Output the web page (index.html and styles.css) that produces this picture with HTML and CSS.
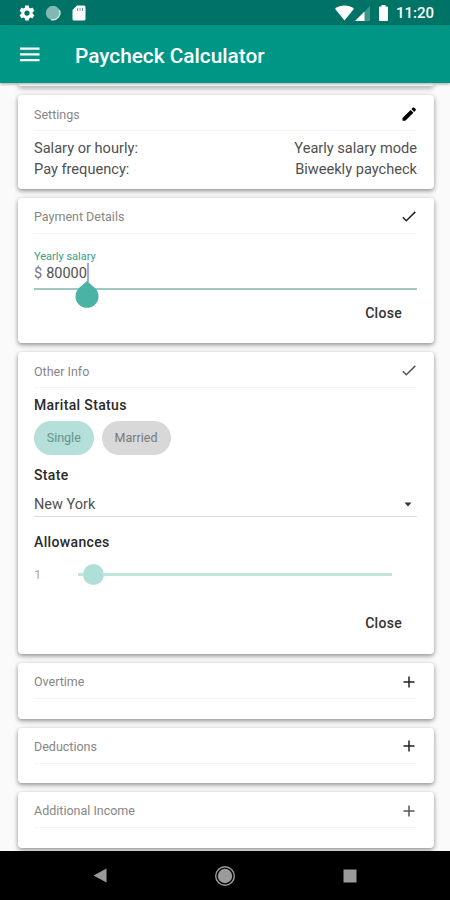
FILE: index.html
```html
<!DOCTYPE html>
<html lang="en">
<head>
<meta charset="utf-8">
<title>Paycheck Calculator</title>
<link rel="stylesheet" href="styles.css">
</head>
<body>
<div class="statusbar">
  <svg class="gear" width="18" height="18" viewBox="0 0 24 24"><path fill="#fff" d="M19.43 12.98c.04-.32.07-.64.07-.98s-.03-.66-.07-.98l2.11-1.65c.19-.15.24-.42.12-.64l-2-3.46c-.12-.22-.39-.3-.61-.22l-2.49 1c-.52-.4-1.08-.73-1.69-.98l-.38-2.65C14.46 2.18 14.25 2 14 2h-4c-.25 0-.46.18-.49.42l-.38 2.65c-.61.25-1.17.59-1.69.98l-2.49-1c-.23-.09-.49 0-.61.22l-2 3.46c-.13.22-.07.49.12.64l2.11 1.65c-.04.32-.07.65-.07.98s.03.66.07.98l-2.11 1.65c-.19.15-.24.42-.12.64l2 3.46c.12.22.39.3.61.22l2.49-1c.52.4 1.08.73 1.69.98l.38 2.65c.03.24.24.42.49.42h4c.25 0 .46-.18.49-.42l.38-2.65c.61-.25 1.17-.59 1.69-.98l2.49 1c.23.09.49 0 .61-.22l2-3.46c.12-.22.07-.49-.12-.64l-2.11-1.65zM12 15.500a3.500 3.500 0 1 1 0-7 3.500 3.500 0 0 1 0 7z"/></svg>
  <svg class="sync" width="16" height="16" viewBox="0 0 16 16"><circle cx="8" cy="8" r="7.200" fill="#7fb9b1"/><path d="M14.300 5A7 7 0 0 1 6 14.600" fill="none" stroke="#d5e9e6" stroke-width="1.300"/></svg>
  <svg class="sd" width="14" height="16" viewBox="0 0 14 16"><path fill="#fff" d="M5 .5h7a1.500 1.500 0 0 1 1.500 1.500v12a1.500 1.500 0 0 1-1.500 1.500H2A1.500 1.500 0 0 1 .5 14V5z"/><path stroke="#00796b" stroke-width="1" opacity=".65" d="M5.500 3v3M8 3v3M10.500 3v3"/></svg>
  <span class="space"></span>
  <svg width="19" height="16" viewBox="0 0 19 16"><path fill="#fff" d="M9.500 15.500 0 3.800C5.500-.6 13.500-.6 19 3.800z"/></svg>
  <svg class="signal" width="15" height="15" viewBox="0 0 15 15"><path fill="#3f958a" d="M0 15 15 0v15z"/><path fill="#fff" d="M0 15 9.500 5.500V15z"/></svg>
  <svg class="battery" width="9" height="16" viewBox="0 0 9 16"><path fill="#fff" d="M2.500 0h4v1.500H8a1 1 0 0 1 1 1V15a1 1 0 0 1-1 1H1a1 1 0 0 1-1-1V2.500a1 1 0 0 1 1-1h1.500z"/></svg>
  <span class="clock">11:20</span>
</div>
<header class="appbar">
  <svg width="20" height="15" viewBox="0 0 20 15"><path fill="#fff" d="M0 .5h19.500v2.200H0zM0 6.300h19.500v2.200H0zM0 12h19.500v2.200H0z"/></svg>
  <h1>Paycheck Calculator</h1>
</header>
<main class="content">
  <section class="card peek"></section>

  <section class="card settings">
    <div class="head"><h2>Settings</h2><svg class="icon" width="16" height="16" viewBox="0 0 16 16"><path d="M1.500 14.800v-2.900L9.600 3.900l2.800 2.800-8.100 8.100zM10.400 3.100l1.400-1.400a1 1 0 0 1 1.400 0l1.400 1.400a1 1 0 0 1 0 1.400l-1.400 1.400z"/></svg></div>
    <div class="pair"><span>Salary or hourly:</span><span class="v1">Yearly salary mode</span></div>
    <div class="pair"><span class="l2">Pay frequency:</span><span class="v2">Biweekly paycheck</span></div>
  </section>

  <section class="card payment">
    <div class="head"><h2>Payment Details</h2><svg class="icon" width="16" height="16" viewBox="0 0 16 16"><path class="line" d="m1.800 8.300 3.500 3.500L14.300 2.900"/></svg></div>
    <div class="field">
      <label>Yearly salary</label>
      <div class="amount"><span class="dollar">$</span><span class="number">80000</span><span class="caret"><svg class="handle" width="24" height="27" viewBox="0 0 24 27"><path fill="#4bb3a6" d="m12 0 8 7.100a11.500 11.500 0 1 1-16 0z"/></svg></span></div>
    </div>
    <button class="close">Close</button>
  </section>

  <section class="card other">
    <div class="head"><h2>Other Info</h2><svg class="icon soft" width="16" height="16" viewBox="0 0 16 16"><path class="line" d="m1.800 8.300 3.500 3.500L14.300 2.900"/></svg></div>
    <h3>Marital Status</h3>
    <div class="chips"><span class="chip on">Single</span><span class="chip">Married</span></div>
    <h3 class="state">State</h3>
    <div class="select"><span>New York</span><svg width="8" height="5" viewBox="0 0 8 5"><path fill="#333" d="M.5.500h7L4 4.500z"/></svg></div>
    <h3 class="allow">Allowances</h3>
    <div class="slider"><span class="value">1</span><span class="stub"></span><span class="thumb"></span><span class="track"></span></div>
    <button class="close">Close</button>
  </section>

  <section class="card small"><div class="head"><h2>Overtime</h2><svg class="icon" width="16" height="16" viewBox="0 0 16 16"><path class="line" d="M8 2.500v11M2.500 8h11"/></svg></div></section>
  <section class="card small"><div class="head"><h2>Deductions</h2><svg class="icon" width="16" height="16" viewBox="0 0 16 16"><path class="line" d="M8 2.500v11M2.500 8h11"/></svg></div></section>
  <section class="card small"><div class="head"><h2>Additional Income</h2><svg class="icon soft" width="16" height="16" viewBox="0 0 16 16"><path class="line" d="M8 2.500v11M2.500 8h11"/></svg></div></section>
</main>
<nav class="navbar">
  <svg width="14" height="15" viewBox="0 0 14 15"><path fill="#9b9b9b" d="M13.500.5v14L.5 7.500z"/></svg>
  <svg width="22" height="22" viewBox="0 0 22 22"><circle cx="11" cy="11" r="9.300" fill="none" stroke="#9b9b9b" stroke-width="1.400"/><circle cx="11" cy="11" r="7.200" fill="#9b9b9b"/></svg>
  <svg width="14" height="14" viewBox="0 0 14 14"><path fill="#9b9b9b" d="M.5.500h13v13H.5z"/></svg>
</nav>
</body>
</html>
```

FILE: styles.css
```css
* { box-sizing: border-box; }
body {
  margin: 0;
  width: 450px;
  height: 900px;
  overflow: hidden;
  display: flex;
  flex-direction: column;
  background: #fafafa;
  font-family: Roboto, sans-serif;
  color: #505050;
}
h1, h2, h3 { margin: 0; font-weight: 400; }
svg { display: block; flex: none; }

.statusbar {
  height: 25px;
  flex: none;
  display: flex;
  align-items: center;
  padding: 1px 16px 0 18px;
  background: #007367;
}
.sync { margin-left: 9px; }
.sd { margin-left: 11px; }
.space { flex: 1; }
.signal { margin-left: 1px; }
.battery { margin-left: 9px; }
.clock { margin-left: 8px; font-size: 15px; font-weight: 500; line-height: 20px; color: #fff; }

.appbar {
  position: relative;
  z-index: 1;
  height: 58px;
  flex: none;
  display: flex;
  align-items: center;
  padding: 0 20px;
  background: #009686;
  box-shadow: 0 1px 3px rgba(0, 0, 0, .35);
}
.appbar h1 { margin-left: 35px; padding-top: 3px; font-size: 20.800px; font-weight: 500; line-height: 26px; color: #fff; }

.content {
  flex: 1;
  min-height: 0;
  overflow: hidden;
  display: flex;
  flex-direction: column;
  gap: 9px;
  padding: 0 16px 0 18px;
}
.card {
  flex: none;
  padding: 0 17px 0 16px;
  background: #fff;
  border-radius: 4px;
  box-shadow: 0 2px 4px rgba(0, 0, 0, .34), 0 1px 6px rgba(0, 0, 0, .12);
}
.peek { height: 3px; border-radius: 0 0 4px 4px; }
.settings { height: 93.500px; }
.payment { height: 145.500px; }
.other { height: 302px; }
.small { height: 55.500px; }

.head {
  height: 36px;
  display: flex;
  align-items: center;
  justify-content: space-between;
  border-bottom: 1px solid #f4f4f4;
}
.head h2 { font-size: 12.500px; line-height: 16px; color: #868686; padding-top: 4px; }
.small h2 { padding-top: 3px; }
.icon { fill: #000; margin-top: 3px; }
.small .icon { margin-top: 2px; }
.icon .line { fill: none; stroke: #222; stroke-width: 1.500; }
.icon.soft .line { stroke: #555; }

.pair { display: flex; justify-content: space-between; height: 21px; line-height: 21px; font-size: 14.600px; }
.head + .pair { margin-top: 7px; }

.field { position: relative; height: 56.500px; padding-top: 16px; border-bottom: 2px solid #9cc9c1; }
.field label { display: block; font-size: 11px; line-height: 12px; padding-top: 1px; color: #399d87; }
.amount { display: flex; height: 22px; line-height: 21px; font-size: 14.500px; }
.dollar { margin-right: 4px; color: #777; }
.caret { position: relative; width: 2px; height: 19px; background: #9aa6ee; }
.handle { position: absolute; left: -12px; top: 18px; }
.close {
  display: block;
  margin: 12.500px 15px 0 auto;
  padding: 0;
  border: 0;
  background: none;
  font: 500 14px/20px Roboto, sans-serif;
  letter-spacing: .3px;
  color: #333;
}

h3 { font-size: 14px; font-weight: 500; line-height: 18px; letter-spacing: .35px; color: #2a2a2a; }
.other h3 { padding-top: 8px; }
.chips { display: flex; gap: 8px; margin-top: 6.500px; }
.chip {
  width: 69px;
  height: 34px;
  border-radius: 17px;
  background: #d8d8d8;
  color: #797979;
  font-size: 12.500px;
  line-height: 34px;
  text-align: center;
}
.chip.on { width: 59.500px; background: #b5e0da; color: #64918b; }
.other .state { padding-top: 11.500px; }
.select {
  height: 33px;
  display: flex;
  align-items: center;
  justify-content: space-between;
  padding: 8px 5px 0 0;
  border-bottom: 1px solid #dcdcdc;
  font-size: 14.500px;
}
.other .allow { padding-top: 16px; }
.slider { display: flex; align-items: center; height: 22px; margin-top: 12.500px; }
.value { width: 44px; font-size: 13px; color: #aaa; }
.stub { width: 5px; height: 3px; background: #c0e3dc; }
.thumb { width: 21px; height: 21px; border-radius: 50%; background: #b0ded8; }
.track { width: 288px; height: 3px; background: #c0e3dc; }
.slider + .close { margin-top: 27px; }

.navbar {
  height: 49px;
  flex: none;
  position: relative;
  z-index: 1;
  display: flex;
  align-items: center;
  justify-content: space-between;
  padding: 0 93px;
  background: #000;
}
```
